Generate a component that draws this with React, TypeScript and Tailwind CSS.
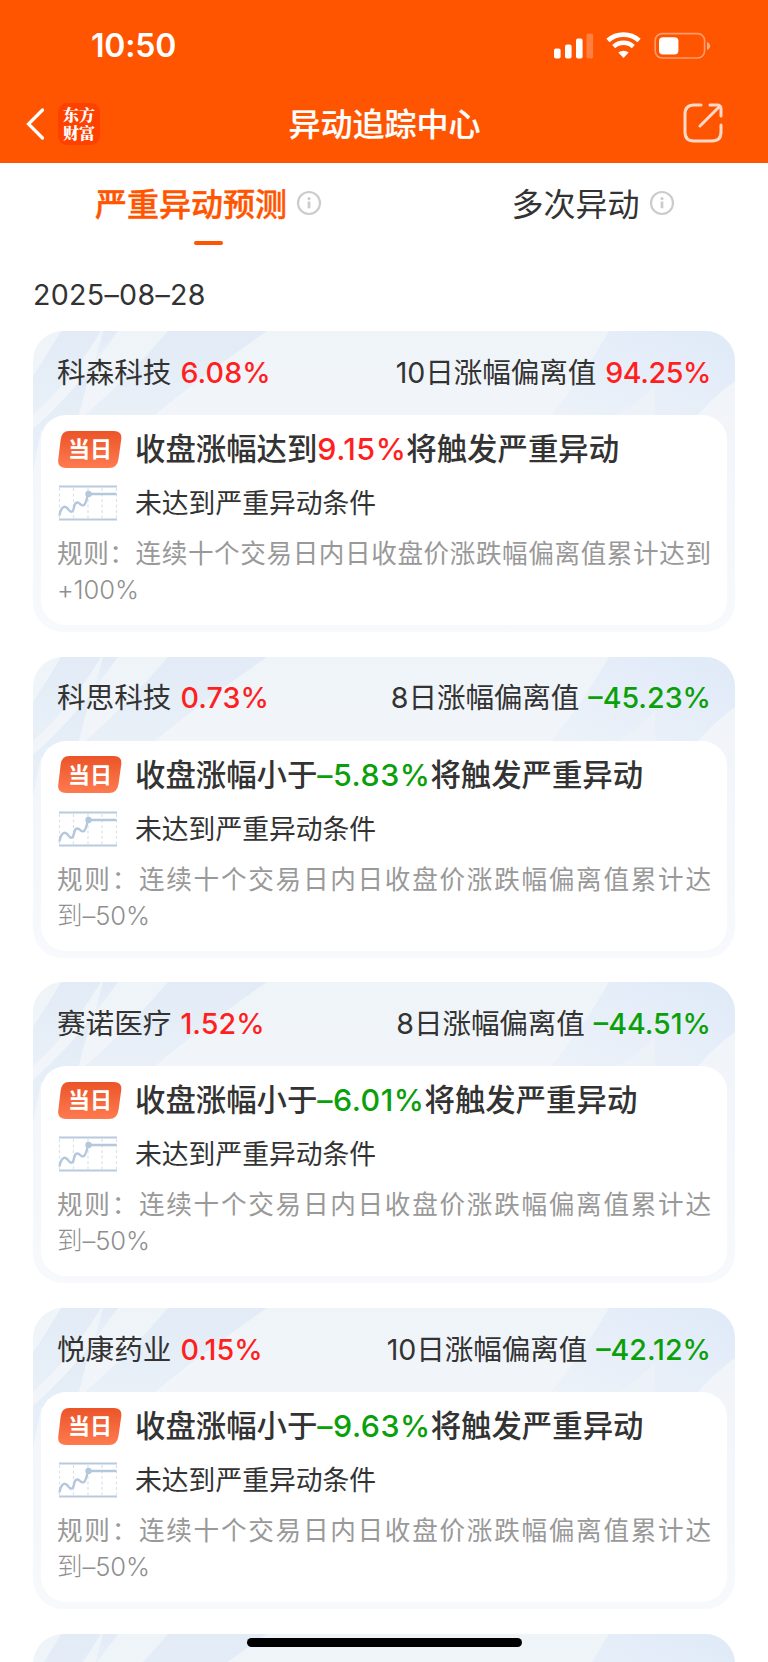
import React from 'react';

type Stock = {
    name: string;
    change: string;
    days: number;
    deviation: string;
    up: boolean;
    condition: string;
    trigger: string;
    rule: string[];
};

const longRule = ['规则：连续十个交易日内日收盘价涨跌幅偏离值累计达', '到–50%'];

const stocks: Stock[] = [
    {
        name: '科森科技',
        change: '6.08%',
        days: 10,
        deviation: '94.25%',
        up: true,
        condition: '收盘涨幅达到',
        trigger: '9.15%',
        rule: ['规则：连续十个交易日内日收盘价涨跌幅偏离值累计达到', '+100%'],
    },
    { name: '科思科技', change: '0.73%', days: 8, deviation: '–45.23%', up: false, condition: '收盘涨幅小于', trigger: '–5.83%', rule: longRule },
    { name: '赛诺医疗', change: '1.52%', days: 8, deviation: '–44.51%', up: false, condition: '收盘涨幅小于', trigger: '–6.01%', rule: longRule },
    { name: '悦康药业', change: '0.15%', days: 10, deviation: '–42.12%', up: false, condition: '收盘涨幅小于', trigger: '–9.63%', rule: longRule },
    { name: '', change: '', days: 0, deviation: '', up: false, condition: '', trigger: '', rule: [] },
];

const StatusBar = () => (
    <div className="flex h-[91px] items-center justify-between pl-[91px] pr-[56px] pt-px">
        <span className="text-[32px] font-semibold leading-none tracking-[-0.2px]">10:50</span>
        <svg width="158" height="28" viewBox="0 0 158 28" fill="none">
            <rect x="0" y="16.5" width="6.6" height="10" rx="2" fill="#fff" />
            <rect x="11" y="12.5" width="6.6" height="14" rx="2" fill="#fff" />
            <rect x="22" y="6.5" width="6.6" height="20" rx="2" fill="#fff" />
            <rect x="32.5" y="1.5" width="6.6" height="25" rx="2" fill="#fff" fillOpacity=".25" />
            {/* wifi */}
            <path d="M53.9 8.5a23.6 23.6 0 0 1 31.200 0" stroke="#fff" strokeWidth="4.800" />
            <path d="M59.7 14.600a14.600 14.600 0 0 1 19.600 0" stroke="#fff" strokeWidth="4.500" />
            <path d="M64.300 20.600a8 8 0 0 1 10.400 0L69.500 26z" fill="#fff" />
            {/* battery */}
            <rect x="101.200" y="1.600" width="49.400" height="24.400" rx="7" stroke="#fff" strokeOpacity=".42" strokeWidth="1.600" />
            <rect x="105" y="5.200" width="19.400" height="17.200" rx="4" fill="#fff" />
            <path d="M153 10c2 .8 3.200 2.300 3.200 4s-1.200 3.200-3.200 4z" fill="#fff" fillOpacity=".5" />
        </svg>
    </div>
);

const InfoIcon = () => (
    <svg width="26" height="26" viewBox="0 0 26 26" fill="none">
        <circle cx="13" cy="13" r="11" stroke="#ccc" strokeWidth="2.200" />
        <circle cx="13" cy="8.600" r="1.600" fill="#ccc" />
        <path d="M13 11.500v6.800" stroke="#ccc" strokeWidth="2.800" />
    </svg>
);

const CardBackground = () => (
    <svg className="absolute inset-0" width="702" height="301" viewBox="0 0 702 301" fill="none">
        <defs>
            <linearGradient id="base" x1="0" y1="0" x2="0" y2="1">
                <stop offset="0" stopColor="#eff4f9" />
                <stop offset="1" stopColor="#f7f9fc" />
            </linearGradient>
            <linearGradient id="left" x1="0" y1="0" x2="0" y2="1">
                <stop offset="0" stopColor="#e2ebf6" />
                <stop offset="1" stopColor="#e9f0f8" />
            </linearGradient>
            <linearGradient id="right" x1="1" y1="0" x2="0" y2="1">
                <stop offset="0" stopColor="#dfeaf8" />
                <stop offset="1" stopColor="#edf2f9" />
            </linearGradient>
        </defs>
        <rect width="702" height="301" fill="url(#base)" />
        <path d="M28 0H68Q38 50 0 84V45Q14 24 28 0Z" fill="url(#left)" />
        <path d="M70 0H85L62 31Q66 14 70 0Z" fill="url(#left)" />
        <path d="M62 31Q36 66 0 98V140L8 100L46 84Q52 56 62 31Z" fill="url(#left)" />
        <path d="M135 0H234Q165 48 122 84H52Q94 48 135 0Z" fill="url(#left)" />
        <path d="M576 0H702V50Q680 66 665 84H518Q550 46 576 0Z" fill="url(#right)" />
        <path d="M584 84Q606 72 622 54V84Z" fill="#edf2f9" />
    </svg>
);

const TodayBadge = () => (
    <div className="relative left-px flex h-[37px] w-[64px] items-center justify-center">
        <svg className="absolute inset-0" width="64" height="37" viewBox="0 0 64 37">
            <defs>
                <linearGradient id="badge" x1="0" y1="0" x2="0" y2="1">
                    <stop offset="0" stopColor="#eb5428" />
                    <stop offset="1" stopColor="#ff7a50" />
                </linearGradient>
            </defs>
            <path d="M11 0H56Q64 0 63.300 8L60.500 28Q59.300 37 51 37H8Q-.6 37 .2 29L2.600 9Q3.500 0 11 0Z" fill="url(#badge)" />
        </svg>
        <span className="relative text-[22px] font-bold leading-none text-white">当日</span>
    </div>
);

const TrendIcon = () => (
    <svg className="relative left-px" width="60" height="36" viewBox="0 0 60 36" fill="none">
        <path d="M1 1.500H59M1 34.500H59" stroke="#b9cade" strokeWidth="2.200" />
        <path d="M1.500 3V33M15.500 3V33M30 3V33M44 3V33M58.500 3V33" stroke="#dbe2ea" strokeWidth="1.200" strokeDasharray="3 2.500" />
        <path d="M1.500 30.500C2 25 5 21 7.500 22C11 23 11 28 14 26.500C17 25 15 18 19 17.500C22 17 23 22 26 20C28 18.500 29 13 30 9H58.500" stroke="#b3c7dd" strokeWidth="2.400" />
        <circle cx="30.500" cy="9" r="3.200" fill="#b3c7dd" />
    </svg>
);

const StockCard = ({ stock }: { stock: Stock }) => {
    const color = stock.up ? 'text-[#ff1f1f]' : 'text-[#0aa00a]';
    return (
        <div className="relative h-[301px] w-[702px] shrink-0 overflow-hidden rounded-[30px]">
            <CardBackground />
            {stock.name && (
                <div className="relative px-2">
                    <div className="flex h-[84px] items-center justify-between px-4 text-[28.600px] text-[#333]">
                        <div className="flex items-center gap-[9px]">
                            <span>{stock.name}</span>
                            <span className="font-medium tracking-[0.1px] text-[#ff1f1f]">{stock.change}</span>
                        </div>
                        <div className="flex items-center gap-[9px]">
                            <span className="tracking-[-0.1px]">{stock.days}日涨幅偏离值</span>
                            <span className={`font-medium ${stock.up ? 'tracking-[-0.4px]' : ''} ${color}`}>{stock.deviation}</span>
                        </div>
                    </div>
                    <div className="h-[210px] rounded-[25px] bg-white px-4 pt-[15px]">
                        <div className="flex h-[38px] items-center gap-[14px]">
                            <TodayBadge />
                            <p className="whitespace-nowrap text-[30.400px] font-medium leading-[38px] text-[#333]">
                                {stock.condition}
                                <span className={`tracking-[0.5px] ${color}`}>{stock.trigger}</span>
                                将触发严重异动
                            </p>
                        </div>
                        <div className="mt-[17px] flex h-[36px] items-center gap-[18px]">
                            <TrendIcon />
                            <p className="text-[26.800px] text-[#333]">未达到严重异动条件</p>
                        </div>
                        <div className="mt-[15px] w-[654px] text-[25.600px] leading-[36px] text-[#999]">
                            <p className="whitespace-nowrap [text-align-last:justify]">{stock.rule[0]}</p>
                            <p className="font-light tracking-[-0.1px] text-[#8f8f8f]">{stock.rule[1]}</p>
                        </div>
                    </div>
                </div>
            )}
        </div>
    );
};

const App = () => {
    return (
        <div className="relative flex h-[1662px] w-[768px] flex-col overflow-hidden bg-white font-[Inter,'Noto_Sans_CJK_SC',sans-serif]">
            <div className="h-[163px] shrink-0 bg-[#ff5500] text-white">
                <StatusBar />
                <div className="flex h-[66px] items-center justify-between pl-[26px] pr-[45px]">
                    <div className="flex w-[120px] items-center gap-[14px]">
                        <svg width="18" height="32" viewBox="0 0 18 32" fill="none">
                            <path d="M16.500 2L2.500 16L16.500 30" stroke="#fff" strokeWidth="3.200" strokeLinecap="round" />
                        </svg>
                        <div className="flex h-[42px] w-[42px] items-center justify-center rounded-[9px] bg-[#ff4100]">
                            <span className="w-[32px] break-all font-['Noto_Serif_CJK_SC','Noto_Sans_CJK_SC',serif] text-[16px] font-black leading-[18px]">东方财富</span>
                        </div>
                    </div>
                    <h1 className="relative top-px text-[32px] font-medium [-webkit-text-stroke:0.2px]">异动追踪中心</h1>
                    <div className="relative -top-px flex w-[100px] justify-end">
                        <svg width="40" height="40" viewBox="0 0 40 40" fill="none" stroke="#ffd9c8" strokeWidth="3" strokeLinecap="round">
                            <path d="M18 2H11Q2 2 2 11V29Q2 38 11 38H29Q38 38 38 29V22" />
                            <path d="M27 2H34Q38 2 38 6V13M36.500 3.500L17 23" />
                        </svg>
                    </div>
                </div>
            </div>

            <div className="flex h-[88px] shrink-0">
                <div className="flex w-[417px] flex-col items-center">
                    <div className="flex h-[78px] items-center gap-[9px] pt-[2px]">
                        <span className="pt-[3px] text-[32px] font-medium text-[#ff5500] [-webkit-text-stroke:0.4px]">严重异动预测</span>
                        <InfoIcon />
                    </div>
                    <div className="h-[4px] w-[29px] rounded-full bg-[#ff5500]" />
                </div>
                <div className="flex h-[78px] w-[351px] items-center justify-center gap-[9px] pl-[1px] pt-[2px]">
                    <span className="pt-[3px] text-[32px] text-[#333]">多次异动</span>
                    <InfoIcon />
                </div>
            </div>

            <p className="flex h-[80px] shrink-0 items-center pl-[33px] pt-[8px] text-[28.600px] tracking-[0.3px] text-[#333]">2025–08–28</p>

            <div className="flex flex-col gap-[24.700px] pl-[33px]">
                {stocks.map((stock, i) => (
                    <StockCard key={i} stock={stock} />
                ))}
            </div>

            {/* home indicator */}
            <div className="absolute bottom-[15px] left-[247px] h-[9px] w-[275px] rounded-full bg-black" />
        </div>
    );
};

export default App;
